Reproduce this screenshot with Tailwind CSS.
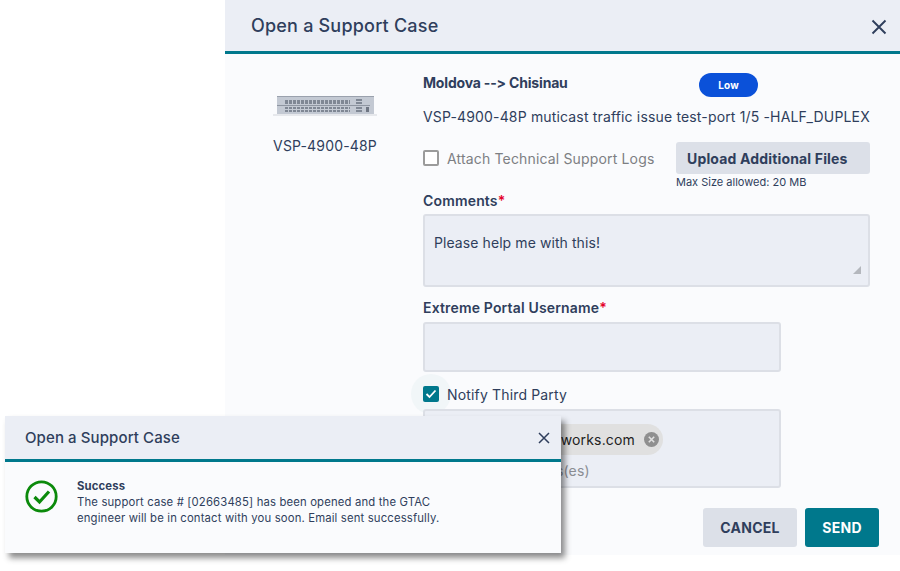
<!DOCTYPE html>
<html lang="en">
<head>
    <meta charset="UTF-8">
    <title>Open a Support Case</title>
    <script src="https://cdn.jsdelivr.net/npm/@tailwindcss/browser@4"></script>
</head>
<body class="bg-white">
    <div class="relative w-[900px] h-[571px] overflow-hidden font-['Inter','Open_Sans',sans-serif] text-[#2f3e5c] tracking-[0.16px] [font-feature-settings:'calt'_0]">

        <!-- Main modal -->
        <div class="ml-[225px] w-[675px] h-[555px] bg-[#fafbfd]">
            <div class="h-[54px] bg-[#ebeef5] border-b-[3px] border-[#00788c] flex items-center justify-between pl-[26px] pr-[13px]">
                <h2 class="text-[18px] font-medium tracking-[0.2px]">Open a Support Case</h2>
                <svg width="16" height="16" viewBox="0 0 16 16" fill="none" stroke="#2f3e5c" stroke-width="1.9" class="mt-[2px]"><path d="M1.5 1.5 14.5 14.5M14.5 1.5 1.5 14.5"/></svg>
            </div>

            <div class="flex">
                <!-- Device -->
                <div class="w-[200px] pt-[41px] flex flex-col items-center shrink-0">
                    <svg width="104" height="22" viewBox="0 0 104 22">
                        <defs>
                            <pattern id="ports" width="4" height="5" patternUnits="userSpaceOnUse">
                                <rect width="3" height="4" fill="#7f8794"/>
                            </pattern>
                        </defs>
                        <rect x="0" y="19" width="104" height="2" fill="#e6e8ec"/>
                        <rect x="4" y="1" width="97" height="18" fill="#c3c9d3"/>
                        <rect x="4" y="1" width="97" height="1" fill="#9aa1ad"/>
                        <rect x="11" y="4" width="66" height="5" fill="url(#ports)"/>
                        <rect x="11" y="12" width="66" height="5" fill="url(#ports)"/>
                        <rect x="4" y="10" width="93" height="1" fill="#8e95a1"/>
                        <rect x="83" y="4" width="6" height="2" fill="#7f8794"/>
                        <rect x="83" y="7" width="6" height="2" fill="#7f8794"/>
                        <rect x="83" y="12" width="6" height="2" fill="#7f8794"/>
                        <rect x="83" y="15" width="6" height="2" fill="#7f8794"/>
                        <rect x="93" y="12" width="3" height="5" fill="#6f7683"/>
                    </svg>
                    <span class="mt-[19px] text-[14px] leading-[20px]">VSP-4900-48P</span>
                </div>

                <!-- Form -->
                <div class="w-[447px] -ml-[2px] pt-[19px] relative">
                    <div class="flex items-start h-[24px]">
                        <span class="w-[276px] text-[14px] leading-[20px] font-bold tracking-[-0.18px]">Moldova --&gt; Chisinau</span>
                        <span class="w-[59px] h-[24px] rounded-full bg-[#0b51d9] text-white text-[10px] font-bold flex items-center justify-center">Low</span>
                    </div>
                    <p class="mt-[10px] text-[14px] leading-[20px] whitespace-nowrap">VSP-4900-48P muticast traffic issue test-port 1/5 -HALF_DUPLEX</p>

                    <div class="mt-[15px] flex items-center justify-between h-[32px]">
                        <div class="flex items-center gap-[8px]">
                            <span class="w-[16px] h-[16px] rounded-[2px] border-2 border-[#9b9b9b] bg-white"></span>
                            <span class="text-[14px] text-[#7d7f83]">Attach Technical Support Logs</span>
                        </div>
                        <div class="w-[194px] h-[32px] rounded-[3px] bg-[#dce0e8] flex items-center pl-[11px] text-[14px] font-bold">Upload Additional Files</div>
                    </div>
                    <p class="ml-[253px] mt-[1px] text-[11px] leading-[14px] tracking-normal whitespace-nowrap">Max Size allowed: 20 MB</p>

                    <label class="block mt-[2px] text-[14px] font-semibold leading-[20px]">Comments<span class="text-[#e4002b]">*</span></label>
                    <div class="mt-[3px] h-[73px] rounded-[3px] border-2 border-[#dcdfe6] bg-[#ebeef5] pl-[9px] pt-[17px] text-[14px] leading-[20px] tracking-[0.08px] relative">
                        Please help me with this!
                        <svg width="8" height="8" viewBox="0 0 8 8" class="absolute right-[7px] bottom-[11px]"><path d="M8 0V8H0Z" fill="#b4b7bd"/></svg>
                    </div>

                    <label class="block mt-[11px] text-[14px] font-semibold leading-[20px]">Extreme Portal Username<span class="text-[#e4002b]">*</span></label>
                    <div class="mt-[4px] w-[358px] h-[50px] rounded-[3px] border-2 border-[#dcdfe6] bg-[#ebeef5]"></div>

                    <div class="mt-[12px] flex items-center gap-[8px] h-[20px] relative">
                        <span class="absolute -left-[12px] -top-[10px] w-[40px] h-[40px] rounded-full bg-[#f1f6f8]"></span>
                        <span class="relative w-[16px] h-[16px] rounded-[2px] bg-[#00788c] flex items-center justify-center">
                            <svg width="12" height="10" viewBox="0 0 12 10" fill="none" stroke="#fff" stroke-width="1.8"><path d="M1.5 5 4.5 8 10.5 1.5"/></svg>
                        </span>
                        <span class="relative text-[14px]">Notify Third Party</span>
                    </div>

                    <div class="mt-[5px] w-[358px] h-[79px] rounded-[3px] border-2 border-[#dcdfe6] bg-[#ebeef5] relative">
                        <div class="ml-[10px] mt-[13px] w-[228px] h-[31px] rounded-full bg-[#e0e0e0] flex items-center justify-end pr-[4px] gap-[9px]">
                            <span class="text-[14px] text-[#222]">extremenetworks.com</span>
                            <span class="w-[15px] h-[15px] rounded-full bg-[#8f8f8f] flex items-center justify-center">
                                <svg width="7" height="7" viewBox="0 0 7 7" fill="none" stroke="#e0e0e0" stroke-width="1.6"><path d="M.8.8 6.2 6.2M6.2.8.8 6.2"/></svg>
                            </span>
                        </div>
                        <span class="block ml-[13px] mt-[6px] text-[14px] leading-[20px] text-[#8a8d93]">Add email address(es)</span>
                    </div>

                    <div class="mt-[20px] flex gap-[8px] ml-[280px] w-max">
                        <button class="w-[94px] h-[39px] rounded-[3px] bg-[#dce0e8] text-[14px] font-bold tracking-[0.3px]">CANCEL</button>
                        <button class="w-[74px] h-[39px] rounded-[3px] bg-[#00788c] text-white text-[14px] font-bold tracking-[0.3px]">SEND</button>
                    </div>
                </div>
            </div>
        </div>

        <!-- Success dialog on top -->
        <div class="absolute left-[5px] top-[416px] w-[556px] h-[137px] bg-[#fafbfd] shadow-[4px_5px_6px_rgba(0,0,0,0.45)]">
            <div class="h-[46px] bg-[#ebeef5] border-b-[3px] border-[#00788c] flex items-center justify-between pl-[20px] pr-[11px]">
                <h3 class="text-[15px] font-medium tracking-[0.1px] pt-[1px]">Open a Support Case</h3>
                <svg width="12" height="12" viewBox="0 0 12 12" fill="none" stroke="#2f3e5c" stroke-width="1.5"><path d="M1 1 11 11M11 1 1 11"/></svg>
            </div>
            <div class="flex pl-[20px] pt-[18px]">
                <svg width="33" height="33" viewBox="0 0 33 33" fill="none" stroke="#0b8a0b" class="shrink-0">
                    <circle cx="16.5" cy="16.5" r="14.7" stroke-width="2.8"/>
                    <path d="M9.5 17 14.5 22 24 11.5" stroke-width="3.2"/>
                </svg>
                <div class="ml-[19px] -mt-[2px] text-[11.3px] leading-[16px] w-[372px]">
                    <p class="font-bold">Success</p>
                    <p>The support case # [02663485] has been opened and the GTAC engineer will be in contact with you soon. Email sent successfully.</p>
                </div>
            </div>
        </div>
    </div>
</body>
</html>
